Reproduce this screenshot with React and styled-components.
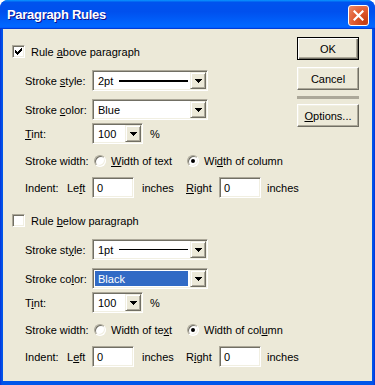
import React from 'react';
import styled, { createGlobalStyle } from 'styled-components';

const GlobalStyle = createGlobalStyle`
  html, body { margin: 0; padding: 0; background: #ffffff; }
  body {
    font-family: "Liberation Sans", Arial, sans-serif;
    font-size: 11px;
    color: #000;
  }
`;

const Window = styled.div`
  width: 375px;
  height: 385px;
  box-sizing: border-box;
  display: flex;
  flex-direction: column;
  background: linear-gradient(to right, #0831d9 0, #0055ea 2px, #0055ea calc(100% - 2px), #0831d9 100%);
  border-radius: 8px 8px 0 0;
  overflow: hidden;
`;

const TitleBar = styled.div`
  height: 29px;
  flex: none;
  display: flex;
  align-items: center;
  justify-content: space-between;
  padding: 0 6px 0 7px;
  background: linear-gradient(to bottom, #0997ff 0%, #0053ee 8%, #0050ee 40%, #0066ff 88%, #0066ff 93%, #005bff 95%, #003dd7 96%, #003dd7 100%);
`;

const Title = styled.div`
  color: #fff;
  font-weight: bold;
  font-size: 13px;
  letter-spacing: -0.3px;
  text-shadow: 1px 1px #0f1089;
`;

const CloseButton = styled.div`
  width: 21px;
  height: 21px;
  box-sizing: border-box;
  border: 1px solid #fff;
  border-radius: 3px;
  background: radial-gradient(circle at 85% 85%, #c43c10 0%, #e05a30 50%, #ec8a66 100%);
  display: flex;
  align-items: center;
  justify-content: center;
  margin-top: 1px;
`;

const Client = styled.div`
  flex: 1;
  margin: 0 3px 4px 3px;
  background: #ece9d8;
  display: flex;
`;

const Main = styled.div`
  flex: 1;
  min-width: 0;
  padding: 16px 0 0 9px;
  display: flex;
  flex-direction: column;
`;

const ButtonColumn = styled.div`
  flex: none;
  width: 62px;
  margin-right: 13px;
  padding-top: 8px;
  display: flex;
  flex-direction: column;
`;

const PushButton = styled.div`
  height: 23px;
  box-sizing: border-box;
  margin-top: ${p => p.$mt || 0}px;
  display: flex;
  align-items: center;
  justify-content: center;
  background: #ece9d8;
  border: 1px solid;
  border-color: ${p => (p.$default ? '#000' : '#fff #716f64 #716f64 #fff')};
  box-shadow: ${p =>
    p.$default
      ? 'inset 1px 1px #fff, inset -1px -1px #716f64, inset -2px -2px #aca899'
      : 'inset -1px -1px #aca899, inset 1px 1px #f1efe2'};
`;

const Separator = styled.div`
  height: 3px;
  margin-top: 6px;
  background: #aca899;
`;

const Section = styled.div`
  display: flex;
  flex-direction: column;
  margin-top: ${p => p.$mt || 0}px;
`;

const CheckRow = styled.div`
  height: 13px;
  display: flex;
  align-items: center;
  gap: 6px;
`;

const Sunken = styled.div`
  box-sizing: border-box;
  background: #fff;
  border: 1px solid;
  border-color: #aca899 #fff #fff #aca899;
  box-shadow: inset 1px 1px #716f64, inset -1px -1px #f1efe2;
`;

const CheckBox = styled(Sunken)`
  width: 13px;
  height: 13px;
  display: flex;
  align-items: center;
  justify-content: center;
`;

const Row = styled.div`
  height: 21px;
  display: flex;
  align-items: center;
  margin-top: ${p => p.$mt}px;
  padding-left: 13px;
`;

const Label = styled.div`
  width: ${p => p.$w || 67}px;
  flex: none;
  white-space: nowrap;
`;

const Combo = styled(Sunken)`
  width: ${p => p.$w}px;
  height: 21px;
  flex: none;
  display: flex;
  align-items: stretch;
  padding: 1px;
`;

const ComboField = styled.div`
  flex: 1;
  display: flex;
  align-items: center;
  padding-left: ${p => (p.$selected ? 3 : 4)}px;
  margin: ${p => (p.$selected ? '1px 2px 1px 1px' : '0')};
  background: ${p => (p.$selected ? '#316ac5' : 'transparent')};
  color: ${p => (p.$selected ? '#fff' : '#000')};
  white-space: nowrap;
  overflow: hidden;
`;

const StrokeLine = styled.div`
  width: 69px;
  height: ${p => p.$h}px;
  background: #000;
  margin-left: auto;
  margin-right: 2px;
`;

const ArrowButton = styled.div`
  width: 16px;
  flex: none;
  box-sizing: border-box;
  background: #ece9d8;
  border: 1px solid;
  border-color: #f1efe2 #716f64 #716f64 #f1efe2;
  box-shadow: inset 1px 1px #fff, inset -1px -1px #aca899;
  display: flex;
  align-items: center;
  justify-content: center;
`;

const Input = styled(Sunken)`
  width: 42px;
  height: 21px;
  flex: none;
  padding-left: 4px;
  display: flex;
  align-items: center;
`;

const Unit = styled.div`
  width: ${p => p.$w}px;
  flex: none;
  padding-left: ${p => p.$pl || 0}px;
  box-sizing: border-box;
  white-space: nowrap;
`;

const RadioOption = styled.div`
  width: ${p => p.$w}px;
  flex: none;
  display: flex;
  align-items: center;
  gap: 5px;
`;

const RadioCircle = styled.div`
  width: 12px;
  height: 12px;
  box-sizing: border-box;
  border-radius: 50%;
  background: #fff;
  border: 1px solid;
  border-color: #aca899 #fff #fff #aca899;
  box-shadow: inset 1px 1px #716f64, inset -1px -1px #f1efe2;
  display: flex;
  align-items: center;
  justify-content: center;
`;

const RadioDot = styled.div`
  width: 4px;
  height: 4px;
  border-radius: 50%;
  background: #000;
`;

const Key = styled.span`
  text-decoration: underline;
  text-underline-offset: 1px;
`;

const CheckMark = () => (
  <svg width="7" height="7" viewBox="0 0 7 7" shapeRendering="crispEdges">
    {[2, 3, 4, 3, 2, 1, 0].map((top, i) => (
      <rect key={i} x={i} y={top} width="1" height="3" fill="#000" />
    ))}
  </svg>
);

const DownArrow = () => (
  <svg width="7" height="4" viewBox="0 0 7 4" shapeRendering="crispEdges">
    <path d="M0 0h7v1h-1v1h-1v1h-1v1h-1v-1h-1v-1h-1v-1h-1z" fill="#000" />
  </svg>
);

const CloseX = () => (
  <svg width="11" height="11" viewBox="0 0 11 11">
    <path d="M1.5 1.5 L9.5 9.5 M9.5 1.5 L1.5 9.5" stroke="#fff" strokeWidth="2.2" strokeLinecap="square" />
  </svg>
);

function RuleSection({ title, checked, keys, stroke, color, selected, mt }) {
  return (
    <Section $mt={mt}>
      <CheckRow>
        <CheckBox>{checked && <CheckMark />}</CheckBox>
        <span>{title}</span>
      </CheckRow>
      <Row $mt={12}>
        <Label>{keys.style}</Label>
        <Combo $w={116}>
          <ComboField>
            {stroke}
            <StrokeLine $h={stroke === '2pt' ? 2 : 1} />
          </ComboField>
          <ArrowButton><DownArrow /></ArrowButton>
        </Combo>
      </Row>
      <Row $mt={8}>
        <Label>{keys.color}</Label>
        <Combo $w={116}>
          <ComboField $selected={selected}>{color}</ComboField>
          <ArrowButton><DownArrow /></ArrowButton>
        </Combo>
      </Row>
      <Row $mt={3}>
        <Label>{keys.tint}</Label>
        <Combo $w={51}>
          <ComboField>100</ComboField>
          <ArrowButton><DownArrow /></ArrowButton>
        </Combo>
        <Unit $w={20} $pl={7}>%</Unit>
      </Row>
      <Row $mt={6}>
        <Label $w={69}>Stroke width:</Label>
        <RadioOption $w={93}>
          <RadioCircle />
          <span>{keys.text}</span>
        </RadioOption>
        <RadioOption $w={120}>
          <RadioCircle><RadioDot /></RadioCircle>
          <span>{keys.column}</span>
        </RadioOption>
      </Row>
      <Row $mt={6}>
        <Label $w={42}>Indent:</Label>
        <Label $w={25}>{keys.left}</Label>
        <Input>0</Input>
        <Unit $w={52} $pl={8}>inches</Unit>
        <Label $w={33}>{keys.right}</Label>
        <Input>0</Input>
        <Unit $w={50} $pl={6}>inches</Unit>
      </Row>
    </Section>
  );
}

export default function App() {
  return (
    <>
      <GlobalStyle />
      <Window>
        <TitleBar>
          <Title>Paragraph Rules</Title>
          <CloseButton><CloseX /></CloseButton>
        </TitleBar>
        <Client>
          <Main>
            <RuleSection
              title={<>Rule <Key>a</Key>bove paragraph</>}
              checked
              stroke="2pt"
              color="Blue"
              keys={{
                style: <>Stroke <Key>s</Key>tyle:</>,
                color: <>Stroke <Key>c</Key>olor:</>,
                tint: <><Key>T</Key>int:</>,
                text: <><Key>W</Key>idth of text</>,
                column: <>Wi<Key>d</Key>th of column</>,
                left: <>Le<Key>f</Key>t</>,
                right: <><Key>R</Key>ight</>,
              }}
            />
            <RuleSection
              mt={16}
              title={<>Rule <Key>b</Key>elow paragraph</>}
              stroke="1pt"
              color="Black"
              selected
              keys={{
                style: <>Stroke st<Key>y</Key>le:</>,
                color: <>Stroke co<Key>l</Key>or:</>,
                tint: <>T<Key>i</Key>nt:</>,
                text: <>Width of te<Key>x</Key>t</>,
                column: <>Width of col<Key>u</Key>mn</>,
                left: <>L<Key>e</Key>ft</>,
                right: <>R<Key>i</Key>ght</>,
              }}
            />
          </Main>
          <ButtonColumn>
            <PushButton $default>OK</PushButton>
            <PushButton $mt={7}>Cancel</PushButton>
            <Separator />
            <PushButton $mt={5}><span><Key>O</Key>ptions...</span></PushButton>
          </ButtonColumn>
        </Client>
      </Window>
    </>
  );
}
